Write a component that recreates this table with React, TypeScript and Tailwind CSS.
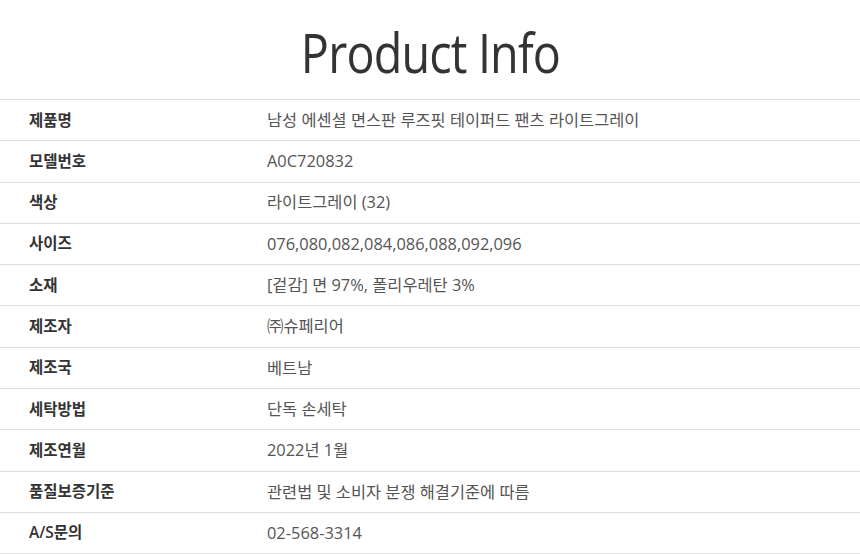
const rows: [string, string][] = [
  ["제품명", "남성 에센셜 면스판 루즈핏 테이퍼드 팬츠 라이트그레이"],
  ["모델번호", "A0C720832"],
  ["색상", "라이트그레이 (32)"],
  ["사이즈", "076,080,082,084,086,088,092,096"],
  ["소재", "[겉감] 면 97%, 폴리우레탄 3%"],
  ["제조자", "㈜슈페리어"],
  ["제조국", "베트남"],
  ["세탁방법", "단독 손세탁"],
  ["제조연월", "2022년 1월"],
  ["품질보증기준", "관련법 및 소비자 분쟁 해결기준에 따름"],
  ["A/S문의", "02-568-3314"],
];

const App = () => {
  return (
    <div className="w-[860px] bg-white font-['Open_Sans','Noto_Sans_CJK_KR',sans-serif]">
      {/* Title */}
      <div className="h-[99px] flex items-center justify-center">
        <h1 className="text-[55px] leading-none font-medium tracking-[-1px] scale-x-[0.85] text-[#333] pt-[4px]">
          Product Info
        </h1>
      </div>

      {/* Info table */}
      <div className="border-b border-[#dedede]">
        {rows.map(([label, value]) => (
          <div
            key={label}
            className="grid grid-cols-[267px_1fr] h-[41.3px] items-center border-t border-[#dedede]"
          >
            <div className="pl-[29px] text-[15.5px] font-semibold text-[#333]">
              {label}
            </div>
            <div className="text-[16.4px] text-[#555]">{value}</div>
          </div>
        ))}
      </div>
    </div>
  );
};

export default App;
